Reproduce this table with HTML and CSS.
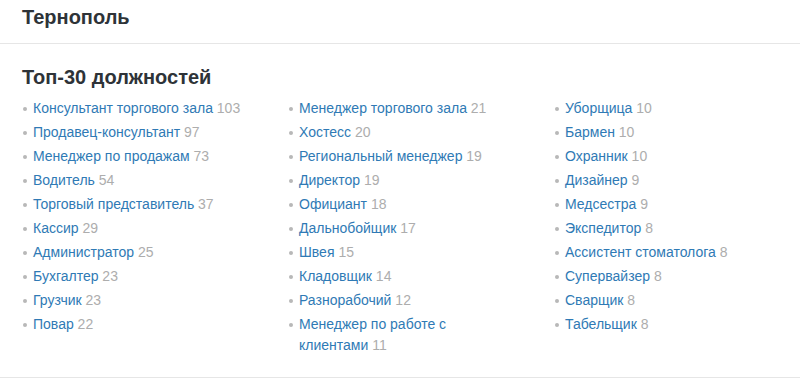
FILE: index.html
```html
<!DOCTYPE html>
<html lang="ru">
<head>
<meta charset="utf-8">
<link rel="stylesheet" href="styles.css">
</head>
<body>
<header class="city">
  <h1 class="city-title">Тернополь</h1>
</header>
<section class="top">
  <h2 class="top-title">Топ-30 должностей</h2>
  <div class="cols">
    <ul class="col">
      <li><a href="#">Консультант торгового зала</a> <span class="n">103</span></li>
      <li><a href="#">Продавец-консультант</a> <span class="n">97</span></li>
      <li><a href="#">Менеджер по продажам</a> <span class="n">73</span></li>
      <li><a href="#">Водитель</a> <span class="n">54</span></li>
      <li><a href="#">Торговый представитель</a> <span class="n">37</span></li>
      <li><a href="#">Кассир</a> <span class="n">29</span></li>
      <li><a href="#">Администратор</a> <span class="n">25</span></li>
      <li><a href="#">Бухгалтер</a> <span class="n">23</span></li>
      <li><a href="#">Грузчик</a> <span class="n">23</span></li>
      <li><a href="#">Повар</a> <span class="n">22</span></li>
    </ul>
    <ul class="col">
      <li><a href="#">Менеджер торгового зала</a> <span class="n">21</span></li>
      <li><a href="#">Хостесс</a> <span class="n">20</span></li>
      <li><a href="#">Региональный менеджер</a> <span class="n">19</span></li>
      <li><a href="#">Директор</a> <span class="n">19</span></li>
      <li><a href="#">Официант</a> <span class="n">18</span></li>
      <li><a href="#">Дальнобойщик</a> <span class="n">17</span></li>
      <li><a href="#">Швея</a> <span class="n">15</span></li>
      <li><a href="#">Кладовщик</a> <span class="n">14</span></li>
      <li><a href="#">Разнорабочий</a> <span class="n">12</span></li>
      <li><a href="#">Менеджер по работе с клиентами</a> <span class="n">11</span></li>
    </ul>
    <ul class="col">
      <li><a href="#">Уборщица</a> <span class="n">10</span></li>
      <li><a href="#">Бармен</a> <span class="n">10</span></li>
      <li><a href="#">Охранник</a> <span class="n">10</span></li>
      <li><a href="#">Дизайнер</a> <span class="n">9</span></li>
      <li><a href="#">Медсестра</a> <span class="n">9</span></li>
      <li><a href="#">Экспедитор</a> <span class="n">8</span></li>
      <li><a href="#">Ассистент стоматолога</a> <span class="n">8</span></li>
      <li><a href="#">Супервайзер</a> <span class="n">8</span></li>
      <li><a href="#">Сварщик</a> <span class="n">8</span></li>
      <li><a href="#">Табельщик</a> <span class="n">8</span></li>
    </ul>
  </div>
</section>
</body>
</html>
```
FILE: styles.css
```css
html, body {
  margin: 0;
  padding: 0;
  background: #fff;
  font-family: "Liberation Sans", Arial, sans-serif;
  color: #333;
}
.city {
  padding: 6px 22px 0;
  height: 37px;
  border-bottom: 1px solid #e6e6e6;
}
.city-title {
  margin: 0;
  font-size: 20px;
  line-height: 22px;
  font-weight: bold;
  color: #2e3338;
}
.top {
  padding: 22px 22px 0;
  height: 311px;
  border-bottom: 1px solid #e6e6e6;
}
.top-title {
  margin: 0 0 10px;
  font-size: 20px;
  line-height: 22px;
  font-weight: bold;
  color: #2e3338;
}
.cols {
  display: grid;
  grid-template-columns: 266px 266px 266px;
}
.col {
  list-style: none;
  margin: 0;
  padding: 0;
}
.col li {
  position: relative;
  padding: 0 42px 0 11px;
  font-size: 14px;
  line-height: 21px;
  margin-bottom: 3px;
}
.col li::before {
  content: "";
  position: absolute;
  left: 1px;
  top: 9px;
  width: 4px;
  height: 4px;
  border-radius: 50%;
  background: #b8b8b8;
}
.col a {
  color: #2f7ab5;
  text-decoration: none;
}
.n {
  color: #adadad;
}
```
